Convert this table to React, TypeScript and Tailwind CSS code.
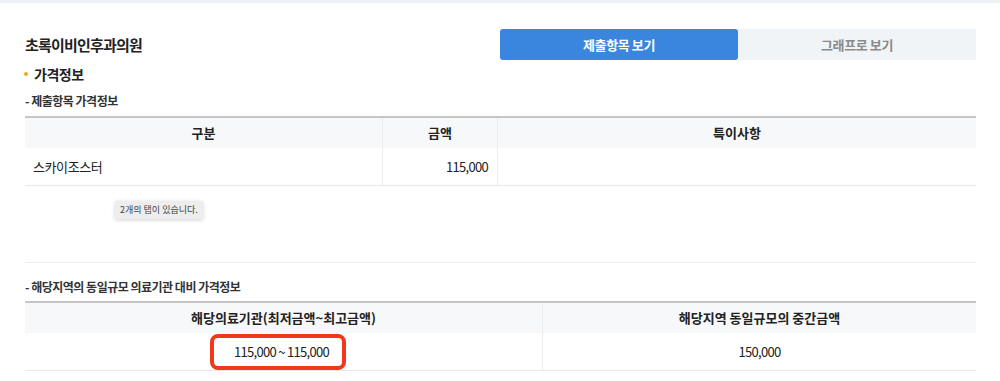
import React from "react";

const FONT = "font-['Noto_Sans_CJK_KR','Noto_Sans',sans-serif]";

function SectionLabel({ children, className = "" }: { children: React.ReactNode; className?: string }) {
  return (
    <div className={`text-[12px] font-bold leading-[16px] tracking-[-0.5px] text-[#333] ${className}`}>
      - {children}
    </div>
  );
}

export default function App() {
  return (
    <div className={`${FONT} w-[1000px] h-[381px] overflow-hidden bg-white text-[#222]`}>
      {/* top strip */}
      <div className="h-[3px] bg-[#eef0f8]" />

      <div className="pl-[25px] pr-[24px]">
        {/* title + tabs */}
        <div className="mt-[26px] flex items-center justify-between">
          <h1 className="text-[15px] font-bold leading-[20px] tracking-[-0.8px]">초록이비인후과의원</h1>
          <div className="flex h-[31px] w-[476px]">
            <button className="flex-1 rounded-[3px] bg-[#3a86df] text-[13px] font-bold tracking-[-0.4px] text-white">
              제출항목 보기
            </button>
            <button className="flex-1 bg-[#f1f4f6] text-[13px] font-bold tracking-[-0.4px] text-[#8a8a8a]">
              그래프로 보기
            </button>
          </div>
        </div>

        {/* section heading */}
        <div className="mt-[5px] flex items-center gap-[6px]">
          <span className="ml-[-1px] h-[4px] w-[4px] rounded-full bg-[#f5a623]" />
          <span className="text-[14px] font-bold leading-[18px] tracking-[-0.5px]">가격정보</span>
        </div>

        <SectionLabel className="mt-[10px]">제출항목 가격정보</SectionLabel>

        {/* table 1 */}
        <div className="relative mt-[7px] border-t-2 border-[#c6c6c6]">
          <div className="grid h-[30px] grid-cols-[358px_115px_1fr] bg-[#f7f8f9] text-[13px] font-bold">
            <div className="flex items-center justify-center border-r border-[#ececec]">구분</div>
            <div className="flex items-center justify-center border-r border-[#ececec]">금액</div>
            <div className="flex items-center justify-center">특이사항</div>
          </div>
          <div className="grid h-[38px] grid-cols-[358px_115px_1fr] border-b border-[#e8e8e8] text-[13px]">
            <div className="flex items-center border-r border-[#ececec] pl-[8px] tracking-[-0.4px]">스카이조스터</div>
            <div className="flex items-center justify-end border-r border-[#ececec] pr-[9px] tracking-[-0.7px]">115,000</div>
            <div />
          </div>
          <div className="h-[77px] border-b border-[#eeeeee]" />

          {/* tooltip overlay */}
          <div className="absolute left-[90px] top-[83px] rounded-[2px] bg-[#eeeded] px-[5px] py-[2px] text-[9px] leading-[14px] text-[#444] shadow-[0_1px_4px_rgba(0,0,0,0.18)]">
            2개의 탭이 있습니다.
          </div>
        </div>

        <SectionLabel className="mt-[16px]">해당지역의 동일규모 의료기관 대비 가격정보</SectionLabel>

        {/* table 2 */}
        <div className="mt-[6px] border-t-2 border-[#c6c6c6]">
          <div className="grid h-[30px] grid-cols-[518px_1fr] bg-[#f7f8f9] text-[13px] font-bold">
            <div className="flex items-center justify-center border-r border-[#ececec]">해당의료기관(최저금액~최고금액)</div>
            <div className="flex items-center justify-center">해당지역 동일규모의 중간금액</div>
          </div>
          <div className="grid h-[38px] grid-cols-[518px_1fr] border-b border-[#e8e8e8] text-[13px] tracking-[-0.7px]">
            <div className="relative flex items-center justify-center border-r border-[#ececec]">
              <span className="mr-[4px]">115,000 ~ 115,000</span>
              <span className="absolute left-[185px] top-[1px] h-[36px] w-[136px] rounded-[8px] border-[4px] border-[#f2381c]" />
            </div>
            <div className="flex items-center justify-center">150,000</div>
          </div>
        </div>
      </div>
    </div>
  );
}
